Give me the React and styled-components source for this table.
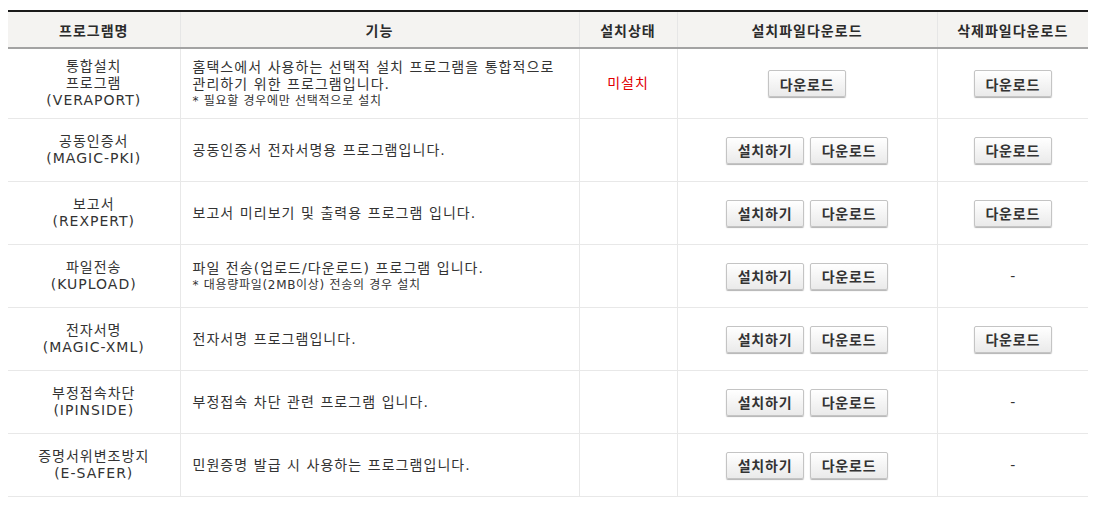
import { styled, createGlobalStyle } from "styled-components"

const Global = createGlobalStyle`
  body{
    margin:0;
    background:#fff;
    font-family:"DejaVu Sans","Noto Sans CJK KR",sans-serif;
    color:#333;
  }
`

const programs = [
  {
    name: ["통합설치", "프로그램", "(VERAPORT)"],
    desc: ["홈택스에서 사용하는 선택적 설치 프로그램을 통합적으로", "관리하기 위한 프로그램입니다."],
    note: "* 필요할 경우에만 선택적으로 설치",
    status: "미설치",
    install: false,
    remove: true,
    tall: true,
  },
  { name: ["공동인증서", "(MAGIC-PKI)"], desc: ["공동인증서 전자서명용 프로그램입니다."], install: true, remove: true },
  { name: ["보고서", "(REXPERT)"], desc: ["보고서 미리보기 및 출력용 프로그램 입니다."], install: true, remove: true },
  {
    name: ["파일전송", "(KUPLOAD)"],
    desc: ["파일 전송(업로드/다운로드) 프로그램 입니다."],
    note: "* 대용량파일(2MB이상) 전송의 경우 설치",
    install: true,
    remove: false,
  },
  { name: ["전자서명", "(MAGIC-XML)"], desc: ["전자서명 프로그램입니다."], install: true, remove: true },
  { name: ["부정접속차단", "(IPINSIDE)"], desc: ["부정접속 차단 관련 프로그램 입니다."], install: true, remove: false },
  { name: ["증명서위변조방지", "(E-SAFER)"], desc: ["민원증명 발급 시 사용하는 프로그램입니다."], install: true, remove: false },
]

function App(){
  return(
    <>
    <Global/>
    <Page>
      <Table>
        <colgroup>
          <col style={{width:172}}/>
          <col style={{width:399}}/>
          <col style={{width:98}}/>
          <col style={{width:260}}/>
          <col style={{width:151}}/>
        </colgroup>
        <thead>
          <tr>
            <Th>프로그램명</Th>
            <Th>기능</Th>
            <Th>설치상태</Th>
            <Th>설치파일다운로드</Th>
            <Th>삭제파일다운로드</Th>
          </tr>
        </thead>
        <tbody>
          {programs.map((p,i)=>(
            <Row key={i} $tall={p.tall}>
              <Name>{p.name.map((n,j)=><div key={j}>{n}</div>)}</Name>
              <Desc>
                {p.desc.map((d,j)=><div key={j}>{d}</div>)}
                {p.note && <Note>{p.note}</Note>}
              </Desc>
              <Center><Status>{p.status}</Status></Center>
              <Center>
                <Buttons>
                  {p.install && <Btn>설치하기</Btn>}
                  <Btn>다운로드</Btn>
                </Buttons>
              </Center>
              <Center>{p.remove ? <Btn>다운로드</Btn> : <Dash>-</Dash>}</Center>
            </Row>
          ))}
        </tbody>
      </Table>
    </Page>
    </>
  )
}
export default App

const Page=styled.div`
  padding:10px 21px 8px 8px;
`

const Table=styled.table`
  width:1080px;
  border-collapse:collapse;
  table-layout:fixed;
  border-top:2px solid #1a1a1a;
`

const Th=styled.th`
  height:35px;
  padding:0;
  background:#f4f3f1;
  border-bottom:2px solid #a3a3a3;
  border-left:1px solid #e6e6e6;
  font-family:"Noto Sans CJK KR",sans-serif;
  font-size:14px;
  font-weight:700;
  letter-spacing:1px;
  color:#2b2b2b;
  text-align:center;
  &:first-child{ border-left:0; }
`

const Row=styled.tr`
  td{
    height:${p=>p.$tall ? "69px" : "62px"};
    padding:0;
    border-bottom:1px solid #e8e8e8;
    border-left:1px solid #e8e8e8;
    font-size:14px;
    line-height:17px;
    vertical-align:middle;
  }
  td:first-child{ border-left:0; }
`

const Name=styled.td`
  text-align:center;
  letter-spacing:1px;
`

const Desc=styled.td`
  && { padding-left:12px; }
  text-align:left;
  letter-spacing:1.05px;
`

const Note=styled.div`
  font-size:12px;
  line-height:16px;
  letter-spacing:0.7px;
`

const Center=styled.td`
  text-align:center;
`

const Status=styled.span`
  color:#e10000;
  letter-spacing:1px;
`

const Dash=styled.span`
  color:#333;
`

const Buttons=styled.div`
  display:flex;
  justify-content:center;
  gap:6px;
`

const Btn=styled.button`
  width:78px;
  height:27px;
  padding:0;
  border:1px solid #c4c4c4;
  border-radius:2px;
  background:linear-gradient(#ffffff,#eaeaea);
  box-shadow:0 1px 1px rgba(0,0,0,.3);
  font-family:"Noto Sans CJK KR",sans-serif;
  font-size:14px;
  font-weight:700;
  letter-spacing:0.8px;
  color:#333;
  cursor:pointer;
`
